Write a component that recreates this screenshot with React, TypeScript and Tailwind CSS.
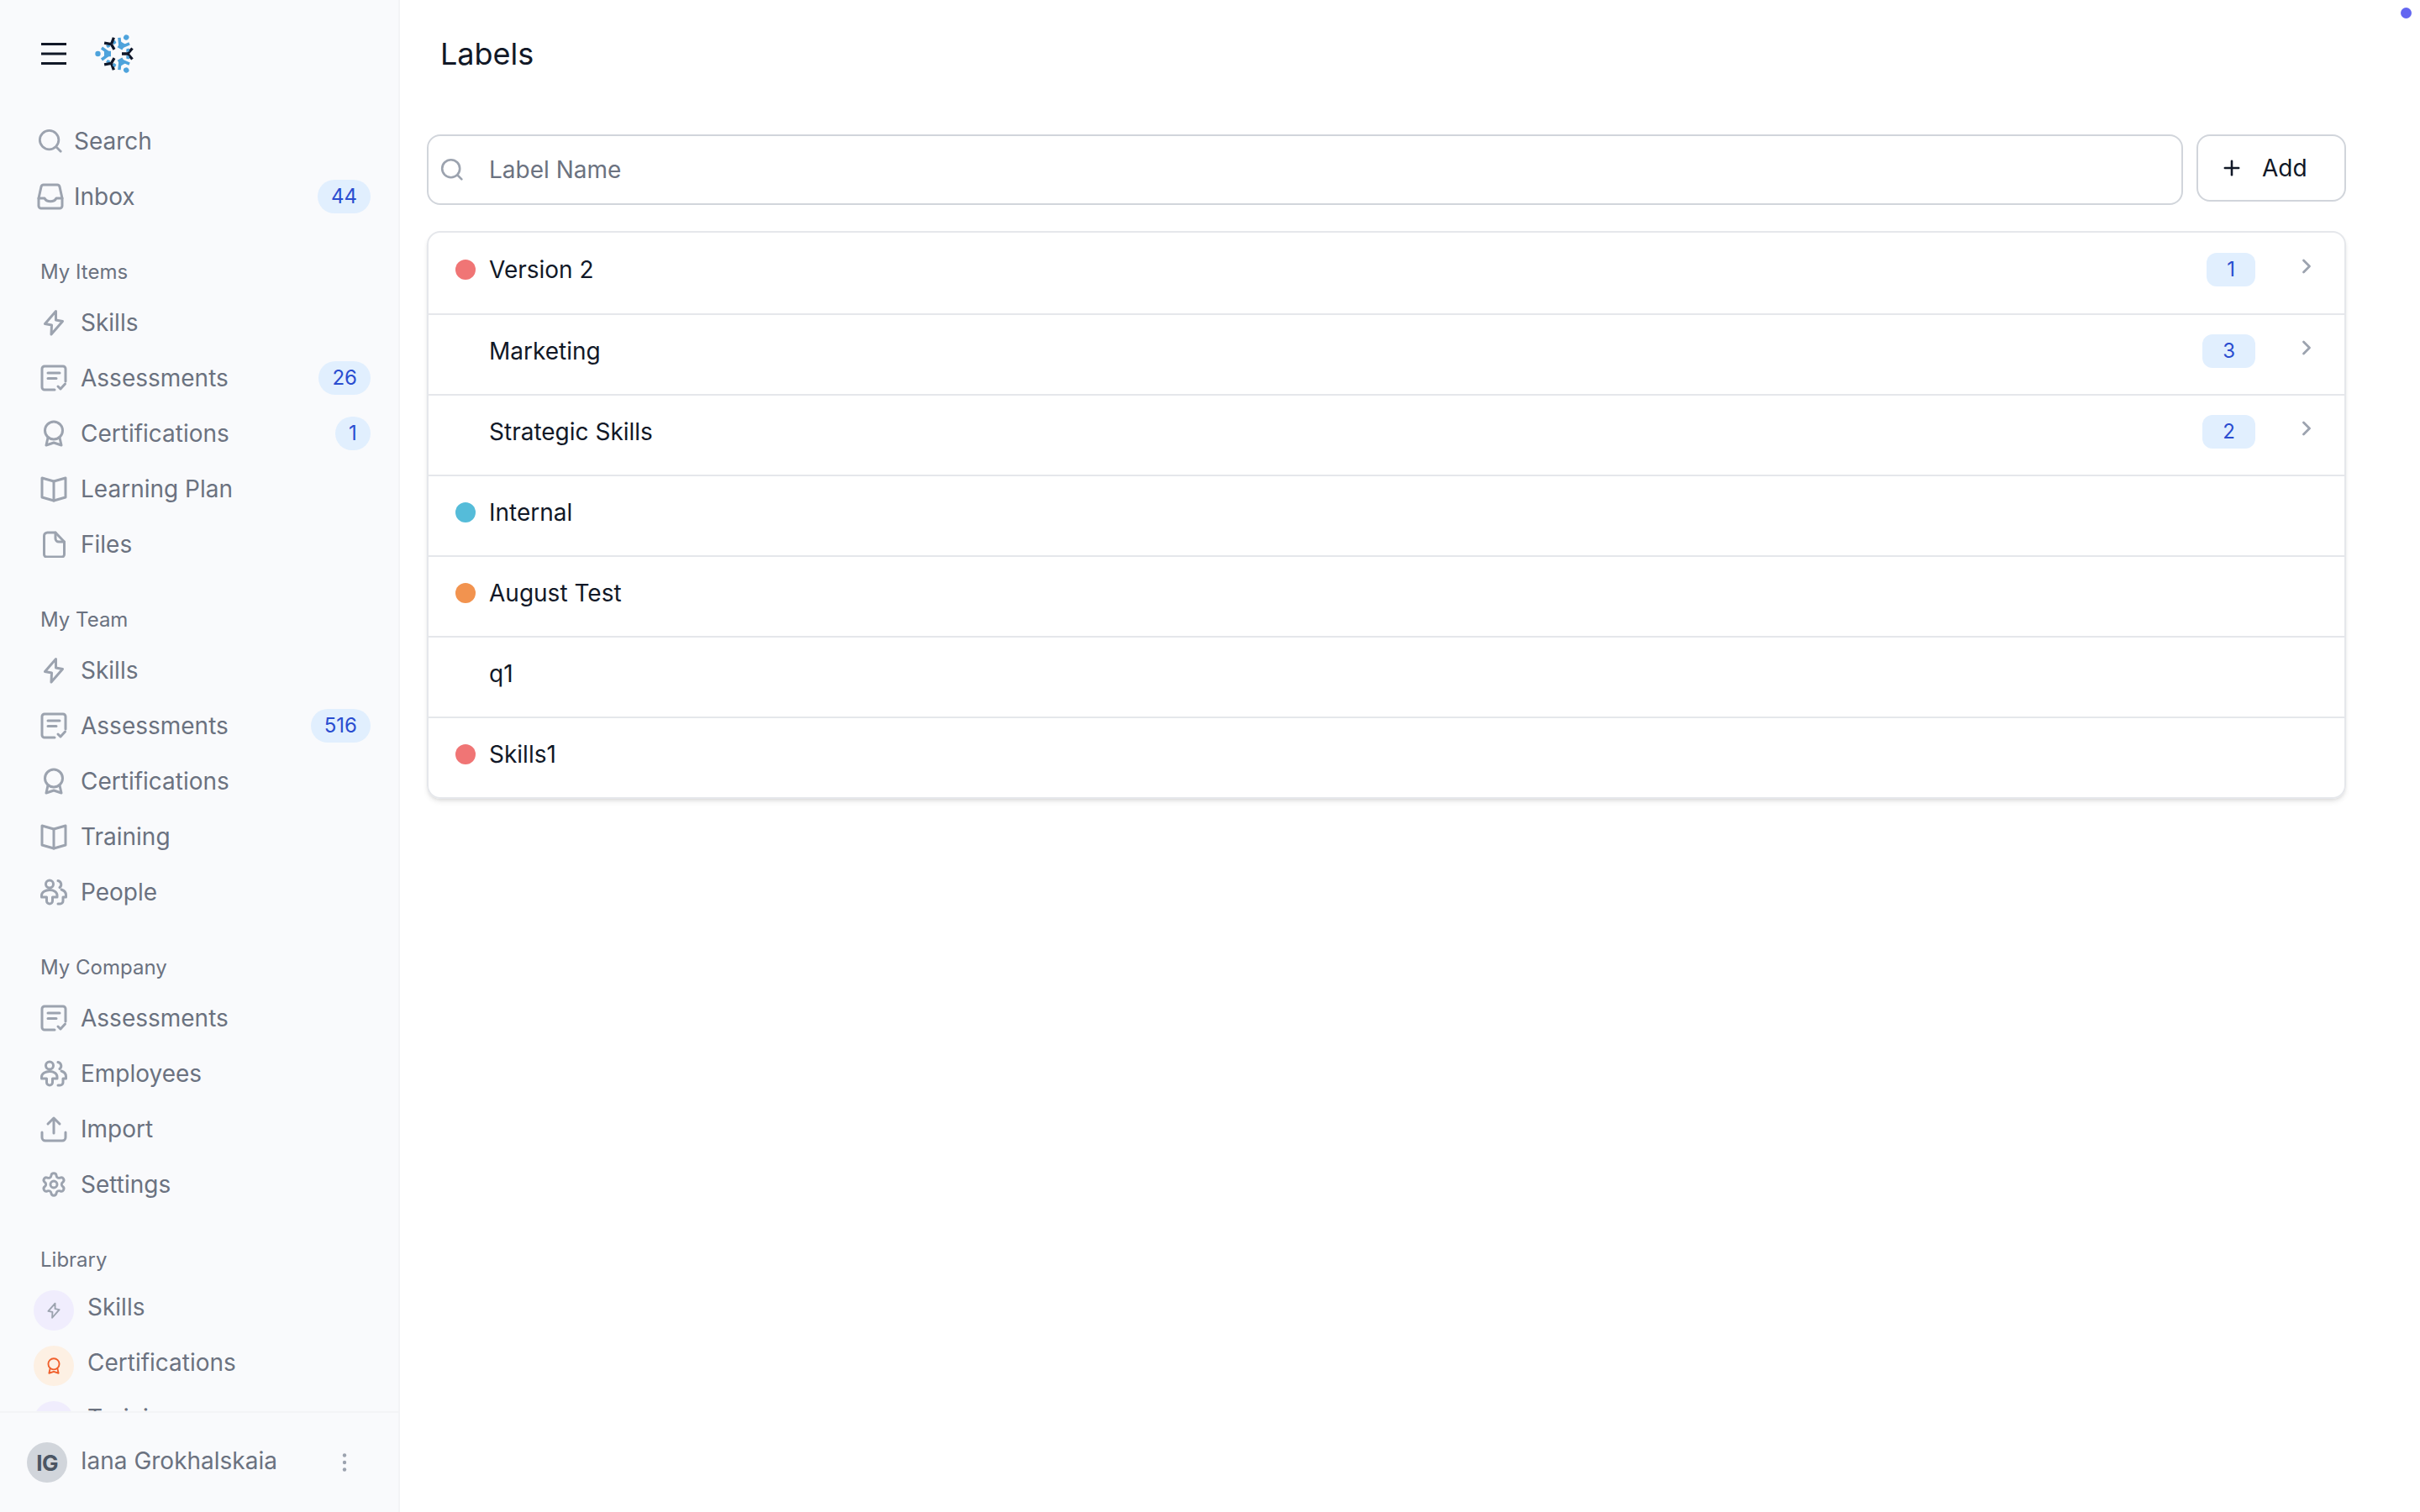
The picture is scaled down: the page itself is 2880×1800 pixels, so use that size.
import React from 'react';
import { ChevronRight, Plus, Settings } from 'lucide-react';

type IconProps = { className?: string };

const Svg = ({ className = 'w-8 h-8', children }: IconProps & { children: React.ReactNode }) => (
  <svg viewBox="0 0 32 32" fill="none" stroke="currentColor" strokeWidth="3" strokeLinecap="round" strokeLinejoin="round" className={`shrink-0 ${className}`}>
    {children}
  </svg>
);

const SearchIcon = ({ className }: IconProps) => (
  <Svg className={className}><circle cx="14.5" cy="14.5" r="12" /><path d="M24 24l5 5" /></Svg>
);
const InboxIcon = ({ className }: IconProps) => (
  <Svg className={className}><path d="M8 2h16a3 3 0 0 1 3 2.400L30 18v9a3 3 0 0 1-3 3H5a3 3 0 0 1-3-3v-9L5 4.400A3 3 0 0 1 8 2z" /><path d="M2 18h7c2.500 5 11.500 5 14 0h7" /></Svg>
);
const BoltIcon = ({ className }: IconProps) => (
  <Svg className={className}><path d="M18.500 2.500L5.500 17.500l8 1.500-.5 11 13.500-15.500-8-1.500z" /></Svg>
);
const AssessmentIcon = ({ className }: IconProps) => (
  <Svg className={className}><path d="M30 20V5a3 3 0 0 0-3-3H5a3 3 0 0 0-3 3v22a3 3 0 0 0 3 3h12" /><path d="M9 10h14M9 16.500h10" /><path d="M21 26l3 3 5.500-6" /></Svg>
);
const CertIcon = ({ className }: IconProps) => (
  <Svg className={className}><circle cx="16" cy="12.500" r="10.500" /><path d="M9 21l-2 9 9-3 9 3-2-9" /></Svg>
);
const BookIcon = ({ className }: IconProps) => (
  <Svg className={className}><path d="M2 3l14 4 14-4v23l-14 4-14-4z" /><path d="M16 7v23" /></Svg>
);
const FileIcon = ({ className }: IconProps) => (
  <Svg className={className}><path d="M18 2H8.500a4 4 0 0 0-4 4v22a3 3 0 0 0 3 3h18a3 3 0 0 0 3-3V13z" /><path d="M18 2v7a4 4 0 0 0 4 4h6.500" /></Svg>
);
const PeopleIcon = ({ className }: IconProps) => (
  <Svg className={className}>
    <circle cx="11" cy="6.500" r="4.500" />
    <path d="M11 13.500c-5 0-9.500 2.500-9.500 6.500v2h6v4.500a3.500 3.500 0 0 0 7 0V22H20v-2c0-4-4-6.500-9-6.500z" />
    <path d="M21 2.500a4.500 4.500 0 0 1 2 8" />
    <path d="M25 13c3 1 5.500 3.500 5.500 6.500V22h-3.500v4.500a3.500 3.500 0 0 1-3.500 3.500H21" />
  </Svg>
);
const UploadIcon = ({ className }: IconProps) => (
  <Svg className={className}><path d="M16 21V3M9 10l7-7 7 7" /><path d="M2 20v6a4 4 0 0 0 4 4h20a4 4 0 0 0 4-4v-6" /></Svg>
);
const GearIcon = ({ className }: IconProps) => <Settings strokeWidth={2.2} className={`w-8 h-8 shrink-0 ${className || ''}`} />;

const Logo = () => (
  <svg viewBox="-26 -26 52 52" className="w-[52px] h-[52px] shrink-0">
    {[0, 120, 240].map((deg) => (
      <g key={deg} transform={`rotate(${deg})`}>
        <circle cx="-22.500" cy="0" r="3.200" fill="#4ea3dc" />
        <path d="M-18 -7L-10.500 -1.500V1.500L-18 7" fill="none" stroke="#4ea3dc" strokeWidth="3.500" />
        <path d="M-15 0H-7" stroke="#4ea3dc" strokeWidth="6.500" />
        <path d="M-13 -10l3.500 -1.500 2 3 -3.500 1.500z M-13 10l3.500 1.500 2 -3 -3.500 -1.500z" fill="#4ea3dc" />
        <path d="M6 0H13M13 0L18.500 -6.500M13 0L18.500 6.500" fill="none" stroke="#0f172a" strokeWidth="3.300" />
      </g>
    ))}
  </svg>
);

type NavItem = { label: string; icon: React.FC<IconProps>; badge?: string };

const Badge = ({ value }: { value: string }) => (
  <span className="ml-auto h-10 min-w-[42px] px-4 flex items-center justify-center rounded-full bg-[#e1effe] text-[#2a4dd0] text-[24px]">{value}</span>
);

const NavRow = ({ item }: { item: NavItem }) => {
  const Icon = item.icon;
  return (
    <div className="flex items-center h-[66px] pl-[48px] pr-[33px] text-[#6b7280] text-[28px]">
      <Icon className="w-8 h-8 text-[#9ca3af]" />
      <span className="ml-[16px]">{item.label}</span>
      {item.badge && <Badge value={item.badge} />}
    </div>
  );
};

const Section = ({ title, items }: { title: string; items: NavItem[] }) => (
  <div className="mt-[37px]">
    <div className="h-10 mb-[7px] pl-[48px] flex items-center text-[24px] text-[#6b7280]">{title}</div>
    {items.map((item) => <NavRow key={item.label} item={item} />)}
  </div>
);

const LibraryRow = ({ label, circle, children }: { label: string; circle: string; children?: React.ReactNode }) => (
  <div className="flex items-center h-[66px] pl-[40px] text-[#6b7280] text-[28px]">
    <span className={`w-12 h-12 rounded-full flex items-center justify-center shrink-0 ${circle}`}>{children}</span>
    <span className="ml-[16px] pb-[8px]">{label}</span>
  </div>
);

const myItems: NavItem[] = [
  { label: 'Skills', icon: BoltIcon },
  { label: 'Assessments', icon: AssessmentIcon, badge: '26' },
  { label: 'Certifications', icon: CertIcon, badge: '1' },
  { label: 'Learning Plan', icon: BookIcon },
  { label: 'Files', icon: FileIcon },
];
const myTeam: NavItem[] = [
  { label: 'Skills', icon: BoltIcon },
  { label: 'Assessments', icon: AssessmentIcon, badge: '516' },
  { label: 'Certifications', icon: CertIcon },
  { label: 'Training', icon: BookIcon },
  { label: 'People', icon: PeopleIcon },
];
const myCompany: NavItem[] = [
  { label: 'Assessments', icon: AssessmentIcon },
  { label: 'Employees', icon: PeopleIcon },
  { label: 'Import', icon: UploadIcon },
  { label: 'Settings', icon: GearIcon },
];

const labels = [
  { name: 'Version 2', dot: 'bg-[#f07575]', count: '1' },
  { name: 'Marketing', count: '3' },
  { name: 'Strategic Skills', count: '2' },
  { name: 'Internal', dot: 'bg-[#55bcd9]' },
  { name: 'August Test', dot: 'bg-[#f2934f]' },
  { name: 'q1' },
  { name: 'Skills1', dot: 'bg-[#f07575]' },
];

export default function App() {
  return (
    <div className="relative flex h-screen bg-white overflow-hidden font-['Inter',sans-serif]">
      <aside className="w-[476px] shrink-0 flex flex-col bg-[#f9fafc] border-r-2 border-[#f3f4f6]">
        <div className="flex-1 min-h-0 overflow-hidden">
          <div className="flex items-center h-[128px] pl-[49px]">
            <svg viewBox="0 0 30 26" className="w-[30px] h-[26px] shrink-0 text-[#111827]" fill="currentColor">
              <rect y="0" width="30" height="3" />
              <rect y="11.500" width="30" height="3" />
              <rect y="23" width="30" height="3" />
            </svg>
            <div className="ml-[34px]"><Logo /></div>
          </div>
          <div className="mt-[7px] flex items-center h-[66px] pl-[45px] text-[#6b7280] text-[28px]">
            <SearchIcon className="w-[30px] h-[30px] text-[#9ca3af]" />
            <span className="ml-[13px]">Search</span>
          </div>
          <div className="flex items-center h-[66px] pl-[44px] pr-[33px] text-[#6b7280] text-[28px]">
            <InboxIcon className="w-8 h-8 text-[#9ca3af]" />
            <span className="ml-[12px]">Inbox</span>
            <Badge value="44" />
          </div>
          <Section title="My Items" items={myItems} />
          <Section title="My Team" items={myTeam} />
          <Section title="My Company" items={myCompany} />
          <div className="mt-[37px]">
            <div className="h-10 mb-[7px] pl-[48px] flex items-center text-[24px] text-[#6b7280]">Library</div>
            <LibraryRow label="Skills" circle="bg-[#f0edfd]"><BoltIcon className="w-5 h-5 text-[#9ca3af]" /></LibraryRow>
            <LibraryRow label="Certifications" circle="bg-[#fdf0e3]"><CertIcon className="w-5 h-5 text-[#f0602c]" /></LibraryRow>
            <LibraryRow label="Training" circle="bg-[#f0edfd]" />
          </div>
        </div>
        <div className="h-[120px] shrink-0 border-t-2 border-[#f3f4f6] flex items-center pl-[32px] pb-[4px]">
          <span className="w-12 h-12 mt-[4px] rounded-full bg-[#d1d5db] flex items-center justify-center text-[#4b5563] text-[26px] font-bold tracking-tight">IG</span>
          <span className="ml-[16px] text-[28px] text-[#6b7280]">Iana Grokhalskaia</span>
          <svg viewBox="0 0 6 22" className="ml-[77px] mt-[4px] w-[6px] h-[22px] text-[#9ca3af]" fill="currentColor">
            <circle cx="3" cy="2.500" r="2.200" /><circle cx="3" cy="11" r="2.200" /><circle cx="3" cy="19.500" r="2.200" />
          </svg>
        </div>
      </aside>

      <main className="flex-1 min-w-0 pl-[32px] pr-[88px]">
        <h1 className="h-[128px] pl-4 flex items-center text-[36px] text-[#111827]">Labels</h1>
        <div className="mt-8 flex items-start gap-4">
          <div className="flex-1 h-[84px] border-2 border-[#d1d5db] rounded-2xl flex items-center pl-[14px]">
            <SearchIcon className="w-[28px] h-[28px] text-[#9ca3af]" />
            <input placeholder="Label Name" className="ml-[30px] flex-1 outline-none text-[28px] placeholder:text-[#6b7280]" />
          </div>
          <button className="w-[178px] h-[80px] border-2 border-[#d1d5db] rounded-2xl flex items-center pl-[26px] text-[#111827] text-[28px]">
            <Plus strokeWidth={2.2} className="w-7 h-7" />
            <span className="ml-[22px]">Add</span>
          </button>
        </div>
        <div className="mt-[31px] border-2 border-[#e5e7eb] rounded-2xl shadow-md">
          {labels.map((row, i) => (
            <div key={row.name} className={`flex items-center h-[96px] pb-2 pl-[32px] pr-[31px] ${i > 0 ? 'border-t-2 border-[#e5e7eb]' : ''}`}>
              <span className={`w-6 h-6 rounded-full shrink-0 ${row.dot || ''}`} />
              <span className="ml-[16px] text-[28px] text-[#111827]">{row.name}</span>
              {row.count && (
                <>
                  <span className="ml-auto h-[40px] min-w-[57px] px-[24px] rounded-xl bg-[#e1effe] text-[#2a4dd0] text-[24px] flex items-center justify-center">{row.count}</span>
                  <ChevronRight strokeWidth={2.4} className="ml-[47px] mb-2 w-7 h-7 text-[#9ca3af]" />
                </>
              )}
            </div>
          ))}
        </div>
      </main>

      <span className="absolute top-[9px] right-[10px] w-[13px] h-[13px] rounded-full bg-[#6366f1]" />
    </div>
  );
}
